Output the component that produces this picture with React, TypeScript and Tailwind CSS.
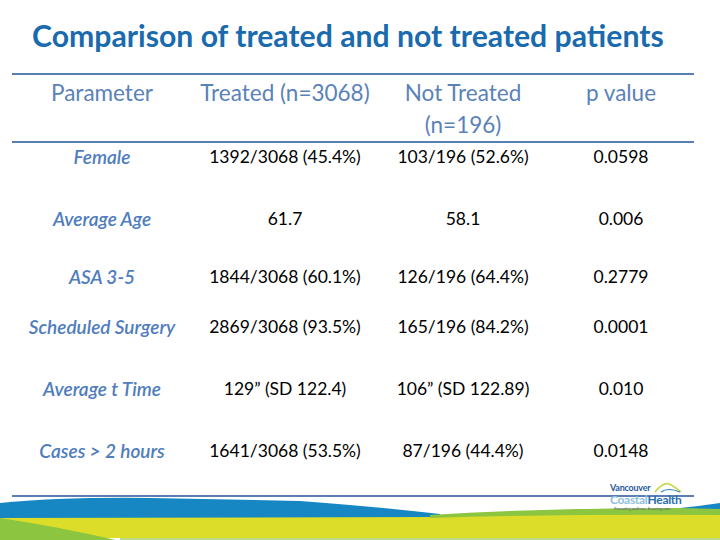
import React from 'react'

const rows = [
  { label: 'Female', treated: '1392/3068 (45.4%)', notTreated: '103/196 (52.6%)', p: '0.0598', h: 'h-[62px]' },
  { label: 'Average Age', treated: '61.7', notTreated: '58.1', p: '0.006', h: 'h-[58px]' },
  { label: 'ASA 3-5', treated: '1844/3068 (60.1%)', notTreated: '126/196 (64.4%)', p: '0.2779', h: 'h-[50px]' },
  { label: 'Scheduled Surgery', treated: '2869/3068 (93.5%)', notTreated: '165/196 (84.2%)', p: '0.0001', h: 'h-[62px]' },
  { label: 'Average t Time', treated: '129” (SD 122.4)', notTreated: '106” (SD 122.89)', p: '0.010', h: 'h-[62px]' },
  { label: 'Cases > 2 hours', treated: '1641/3068 (53.5%)', notTreated: '87/196 (44.4%)', p: '0.0148', h: 'h-[58px]' },
]

const cols = 'grid grid-cols-[180px_186px_170px_146px]'

function Logo() {
  return (
    <div className="absolute left-[610px] top-[482px] flex flex-col">
      <div className="flex items-end h-[11px]">
        <span className="text-[9px] leading-[10px] font-bold text-[#2a5a9a] tracking-tight">Vancouver</span>
        <svg width="28" height="11" viewBox="0 0 28 11" className="ml-[4px]">
          <path d="M1 10 Q9 0 15 2 Q20 4 27 10" stroke="#c8d84a" strokeWidth="1.6" fill="none" />
          <path d="M7 10 Q14 5 26 10" stroke="#2a7ab8" strokeWidth="1.2" fill="none" />
        </svg>
      </div>
      <div className="flex text-[12px] leading-[13px] font-bold tracking-tight">
        <span className="text-[#8fc0df]">Coastal</span>
        <span className="text-[#2a6fb0]">Health</span>
      </div>
      <span className="text-[4px] leading-[5px] italic text-[#557] ml-[4px]">Promoting wellness. Ensuring care.</span>
    </div>
  )
}

function Waves() {
  return (
    <svg width="720" height="44" viewBox="0 0 720 44" className="block">
      <rect x="0" y="0" width="720" height="44" fill="#ffffff" />
      <path d="M0 22 L0 6 Q60 0 150 1 L300 4 Q380 10 440 17 L440 23 L0 23 Z" fill="#1787c3" />
      <path d="M0 21 L440 20 Q560 13 720 12 L720 41 L0 41 Z" fill="#dcdd29" />
      <path d="M430 18 Q560 10 720 11 L720 18 Q560 17 430 21 Z" fill="#8cc540" />
      <path d="M680 11 Q700 9 720 6 L720 12 Z" fill="#1787c3" />
      <path d="M0 21 Q60 30 120 44 L0 44 Z" fill="#8cc540" />
      <rect x="120" y="41" width="600" height="3" fill="#bdd98a" />
    </svg>
  )
}

export default function App() {
  return (
    <div className="relative w-[720px] h-[540px] bg-white overflow-hidden font-['Lato','Open_Sans',sans-serif]">
      <h1 className="pl-[32px] pt-[17px] h-[73px] text-[30.2px] leading-[36px] font-bold text-[#1a6aae]">
        Comparison of treated and not treated patients
      </h1>
      <div className="ml-[12px] w-[682px] border-t-2 border-b-2 border-[#5b7fb2]">
        <div className={`${cols} h-[66px] pt-[2px] text-[22.5px] leading-[32px] text-[#5a82b9] text-center`}>
          <div>Parameter</div>
          <div>Treated (n=3068)</div>
          <div className="px-[10px]">Not Treated (n=196)</div>
          <div>p value</div>
        </div>
      </div>
      <div className="ml-[12px] w-[682px] border-b-2 border-[#5b7fb2]">
        {rows.map((r) => (
          <div key={r.label} className={`${cols} ${r.h} pt-[2px] text-[17.5px] leading-[24px] text-center text-black`}>
            <div className="italic text-[19px] text-[#4f7dbd] font-semibold">{r.label}</div>
            <div>{r.treated}</div>
            <div>{r.notTreated}</div>
            <div>{r.p}</div>
          </div>
        ))}
      </div>
      <Waves />
      <Logo />
    </div>
  )
}
